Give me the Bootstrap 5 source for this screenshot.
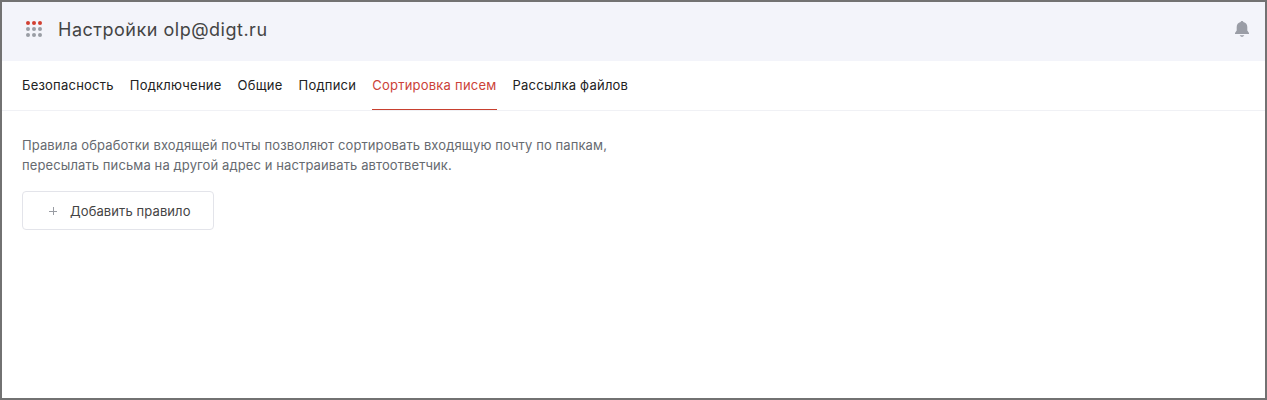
<!DOCTYPE html>
<html lang="ru">
<head>
<meta charset="utf-8">
<title>Настройки</title>
<link href="https://cdn.jsdelivr.net/npm/bootstrap@5.3.0/dist/css/bootstrap.min.css" rel="stylesheet">
<style>
body{font-family:Inter,sans-serif;font-size:13px;line-height:20px;color:#333}
.frame{height:400px;border:2px solid #727272}
.topbar{height:59px;background:#f3f4fa;padding:0 16px 5px 24px}
.title{font-size:18px;line-height:24px;letter-spacing:.51px;color:#444;margin-left:16px;padding-top:1px}
.tabs{height:50px;border-bottom:1px solid #f0f1f5;padding-left:20px;gap:16px}
.tabs .nav-link{padding:0;height:49px;line-height:49px;color:#222;letter-spacing:.23px}
.tabs .nav-link.active{color:#cb4238;border-bottom:1px solid #c8402f}
.content{padding:24px 20px}
.intro{color:#666a70;letter-spacing:.105px}
.add{width:192px;height:39px;border:1px solid #e3e4ea;border-radius:4px;font-size:13px;color:#444;letter-spacing:.1px;padding:1px 0 0 25px;gap:12px}
.add span{padding-top:2px}
</style>
</head>
<body>
<div class="frame d-flex flex-column">
<header class="topbar d-flex align-items-center">
<svg width="16" height="16" viewBox="0 0 16 16" fill="#9a9da4"><g fill="#d23f31"><circle cx="2" cy="2" r="2"/><circle cx="8" cy="2" r="2"/><circle cx="14" cy="2" r="2"/></g><circle cx="2" cy="8" r="2"/><circle cx="8" cy="8" r="2"/><circle cx="14" cy="8" r="2"/><circle cx="2" cy="14" r="2"/><circle cx="8" cy="14" r="2"/><circle cx="14" cy="14" r="2"/></svg>
<h1 class="title fw-normal mb-0">Настройки olp@digt.ru</h1>
<svg class="ms-auto" width="14" height="16" viewBox="0 0 14 16" fill="#9a9da6"><path d="M7 0c-.8 0-1.200.4-1.300 1C3 1.600 1.700 3.500 1.700 6v3.500L0 12v1h14v-1l-1.700-2.500V6c0-2.500-1.300-4.400-4-5C8.200.4 7.800 0 7 0zM4.700 14.200c.3.900 1.200 1.500 2.300 1.500s2-.6 2.300-1.500z"/></svg>
</header>
<nav class="tabs nav flex-nowrap">
<a class="nav-link" href="#">Безопасность</a><a class="nav-link" href="#">Подключение</a><a class="nav-link" href="#">Общие</a><a class="nav-link" href="#">Подписи</a><a class="nav-link active" href="#">Сортировка писем</a><a class="nav-link" href="#">Рассылка файлов</a>
</nav>
<main class="content">
<p class="intro mb-3">Правила обработки входящей почты позволяют сортировать входящую почту по папкам,<br>пересылать письма на другой адрес и настраивать автоответчик.</p>
<button class="btn add d-flex align-items-center"><svg width="10" height="10" stroke="#999ca3"><path d="M5.500 1v8M1 5.500h8"/></svg><span>Добавить правило</span></button>
</main>
</div>
<script src="https://cdn.jsdelivr.net/npm/bootstrap@5.3.0/dist/js/bootstrap.bundle.min.js"></script>
</body>
</html>
